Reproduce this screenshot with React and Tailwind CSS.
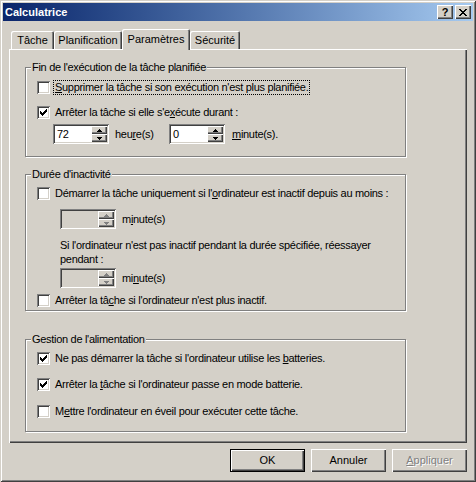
const raised =
  "shadow-[inset_1px_1px_#ffffff,inset_-1px_-1px_#404040,inset_-2px_-2px_#808080]";
const sunken =
  "shadow-[inset_1px_1px_#808080,inset_-1px_-1px_#ffffff,inset_2px_2px_#404040,inset_-2px_-2px_#d4d0c8]";
const etched =
  "border border-[#808080] shadow-[inset_1px_1px_#ffffff,1px_1px_#ffffff]";
const disabledText = "text-[#808080] [text-shadow:1px_1px_0_#ffffff]";

// mnemonic letter
function M({ children }) {
  return <span className="underline underline-offset-[1px]">{children}</span>;
}

function Check({ checked }) {
  const cols = [2, 3, 4, 3, 2, 1, 0];
  return (
    <span className={`flex items-center justify-center shrink-0 w-[13px] h-[13px] bg-white ${sunken}`}>
      {checked && (
        <svg width="7" height="7" viewBox="0 0 7 7" shapeRendering="crispEdges">
          {cols.map((y, x) => (
            <rect key={x} x={x} y={y} width="1" height="3" fill="#000" />
          ))}
        </svg>
      )}
    </span>
  );
}

function CheckRow({ checked, focus, className = "", children }) {
  return (
    <div className={`flex items-center h-[13px] gap-[3px] ${className}`}>
      <Check checked={checked} />
      <span
        className={`px-[1px] leading-[13px] border border-dotted whitespace-nowrap ${
          focus ? "border-black" : "border-transparent"
        }`}>
        {children}
      </span>
    </div>
  );
}

function SpinBtn({ up, disabled }) {
  const fill = disabled ? "#808080" : "#000";
  return (
    <div className={`flex-1 flex items-center justify-center bg-[#d4d0c8] ${raised}`}>
      <svg width="5" height="3" viewBox="0 0 5 3" shapeRendering="crispEdges">
        {up ? (
          <>
            <rect x="2" y="0" width="1" height="1" fill={fill} />
            <rect x="1" y="1" width="3" height="1" fill={fill} />
            <rect x="0" y="2" width="5" height="1" fill={fill} />
          </>
        ) : (
          <>
            <rect x="0" y="0" width="5" height="1" fill={fill} />
            <rect x="1" y="1" width="3" height="1" fill={fill} />
            <rect x="2" y="2" width="1" height="1" fill={fill} />
          </>
        )}
      </svg>
    </div>
  );
}

function Spin({ value, disabled }) {
  return (
    <div
      className={`flex shrink-0 w-[56px] h-[20px] p-[2px] ${sunken} ${
        disabled ? "bg-[#d4d0c8]" : "bg-white"
      }`}>
      <div className="flex-1 pl-[2px] leading-[16px]">{value}</div>
      <div className="flex flex-col w-[16px]">
        <SpinBtn up disabled={disabled} />
        <SpinBtn disabled={disabled} />
      </div>
    </div>
  );
}

function Group({ title, className = "", children }) {
  return (
    <div className={`relative w-[381px] ${etched} ${className}`}>
      <span className="absolute -top-[7px] left-[5px] px-[1px] bg-[#d4d0c8] leading-[13px]">
        {title}
      </span>
      {children}
    </div>
  );
}

function Tab({ label, selected, w }) {
  return selected ? (
    <div
      className={`${w} h-[21px] -mb-px z-10 flex items-start justify-center pt-[4px] bg-[#d4d0c8] rounded-t-[2px] shadow-[inset_1px_1px_#ffffff,inset_-1px_0_#404040,inset_-2px_0_#808080]`}>
      {label}
    </div>
  ) : (
    <div
      className={`${w} h-[18px] mt-[2px] flex items-start justify-center pt-[3px] bg-[#d4d0c8] rounded-t-[2px] shadow-[inset_1px_1px_#ffffff,inset_-1px_0_#404040,inset_-2px_0_#808080]`}>
      {label}
    </div>
  );
}

function Button({ children, isDefault, disabled }) {
  return (
    <div
      className={`w-[75px] h-[23px] flex items-center justify-center bg-[#d4d0c8] ${
        isDefault
          ? "border border-black shadow-[inset_1px_1px_#ffffff,inset_-1px_-1px_#404040,inset_-2px_-2px_#808080]"
          : "shadow-[inset_1px_1px_#ffffff,inset_-1px_-1px_#404040,inset_-2px_-2px_#808080]"
      } ${disabled ? disabledText : ""}`}>
      {children}
    </div>
  );
}

function CaptionBtn({ children }) {
  return (
    <div className={`w-[16px] h-[14px] flex items-center justify-center bg-[#d4d0c8] ${raised}`}>
      {children}
    </div>
  );
}

export default function App() {
  const xRows = [
    [0, 1, 6, 7],
    [1, 2, 5, 6],
    [2, 3, 4, 5],
    [3, 4],
    [2, 3, 4, 5],
    [1, 2, 5, 6],
    [0, 1, 6, 7],
  ];
  return (
    <div className="w-[476px] h-[482px] bg-[#d4d0c8] p-[3px] text-[11px] leading-[13px] text-black font-['Liberation_Sans',Arial,sans-serif] shadow-[inset_1px_1px_#d4d0c8,inset_-1px_-1px_#404040,inset_2px_2px_#ffffff,inset_-2px_-2px_#808080]">
      {/* title bar */}
      <div className="h-[18px] flex items-center justify-between pl-[2px] pr-[2px] bg-linear-to-r from-[#0a246a] to-[#a6caf0]">
        <span className="text-white font-bold">Calculatrice</span>
        <div className="flex gap-[2px]">
          <CaptionBtn>
            <span className="font-bold text-[11px] leading-[11px] pt-[1px]">?</span>
          </CaptionBtn>
          <CaptionBtn>
            <svg width="8" height="7" viewBox="0 0 8 7" shapeRendering="crispEdges">
              {xRows.map((row, y) =>
                row.map((x) => <rect key={`${x}-${y}`} x={x} y={y} width="1" height="1" fill="#000" />)
              )}
            </svg>
          </CaptionBtn>
        </div>
      </div>

      <div className="px-[6px] mt-[8px]">
        {/* tabs */}
        <div className="flex pl-[2px] h-[20px] items-start">
          <Tab label="Tâche" w="w-[43px]" />
          <Tab label="Planification" w="w-[68px]" />
          <Tab label="Paramètres" w="w-[68px]" selected />
          <Tab label="Sécurité" w="w-[50px]" />
        </div>

        {/* tab panel */}
        <div className="h-[394px] pl-[16px] pt-[18px] tracking-[-0.3px] shadow-[inset_1px_1px_#ffffff,inset_-1px_-1px_#404040,inset_-2px_-2px_#808080]">
          <Group title="Fin de l'exécution de la tâche planifiée" className="h-[90px] pt-[13px] pl-[11px]">
            <CheckRow focus>
              <M>S</M>upprimer la tâche si son exécution n'est plus planifiée.
            </CheckRow>
            <CheckRow checked className="mt-[12px]">
              Arrêter la tâche si elle s'e<M>x</M>écute durant :
            </CheckRow>
            <div className="flex items-center mt-[5px] ml-[16px]">
              <Spin value="72" />
              <span className="w-[60px] pl-[6px]">
                heu<M>r</M>e(s)
              </span>
              <Spin value="0" />
              <span className="pl-[7px]">
                <M>m</M>inute(s).
              </span>
            </div>
          </Group>

          <Group title="Durée d'inactivité" className="h-[137px] mt-[17px] pt-[12px] pl-[11px]">
            <CheckRow>
              Démarrer la tâche uniquement si l'<M>o</M>rdinateur est inactif depuis au moins :
            </CheckRow>
            <div className="flex items-center mt-[9px] ml-[23px]">
              <Spin disabled />
              <span className="pl-[6px]">
                m<M>i</M>nute(s)
              </span>
            </div>
            <p className="mt-[9px] ml-[23px] leading-[14px]">
              Si l'ordinateur n'est pas inactif pendant la durée spécifiée, réessayer
              <br />
              pendant :
            </p>
            <div className="flex items-center mt-[2px] ml-[23px]">
              <Spin disabled />
              <span className="pl-[6px]">
                mi<M>n</M>ute(s)
              </span>
            </div>
            <CheckRow className="mt-[6px]">
              Arrêter la tâ<M>c</M>he si l'ordinateur n'est plus inactif.
            </CheckRow>
          </Group>

          <Group title="Gestion de l'alimentation" className="h-[93px] mt-[28px] pt-[12px] pl-[11px]">
            <CheckRow checked>
              Ne pas démarrer la tâche si l'ordinateur utilise les <M>b</M>atteries.
            </CheckRow>
            <CheckRow checked className="mt-[13px]">
              Arrêter la <M>t</M>âche si l'ordinateur passe en mode batterie.
            </CheckRow>
            <CheckRow className="mt-[14px]">
              M<M>e</M>ttre l'ordinateur en éveil pour exécuter cette tâche.
            </CheckRow>
          </Group>
        </div>

        {/* buttons */}
        <div className="flex justify-end gap-[6px] mt-[6px]">
          <Button isDefault>OK</Button>
          <Button>Annuler</Button>
          <Button disabled>
            <span>
              <M>A</M>ppliquer
            </span>
          </Button>
        </div>
      </div>
    </div>
  );
}
